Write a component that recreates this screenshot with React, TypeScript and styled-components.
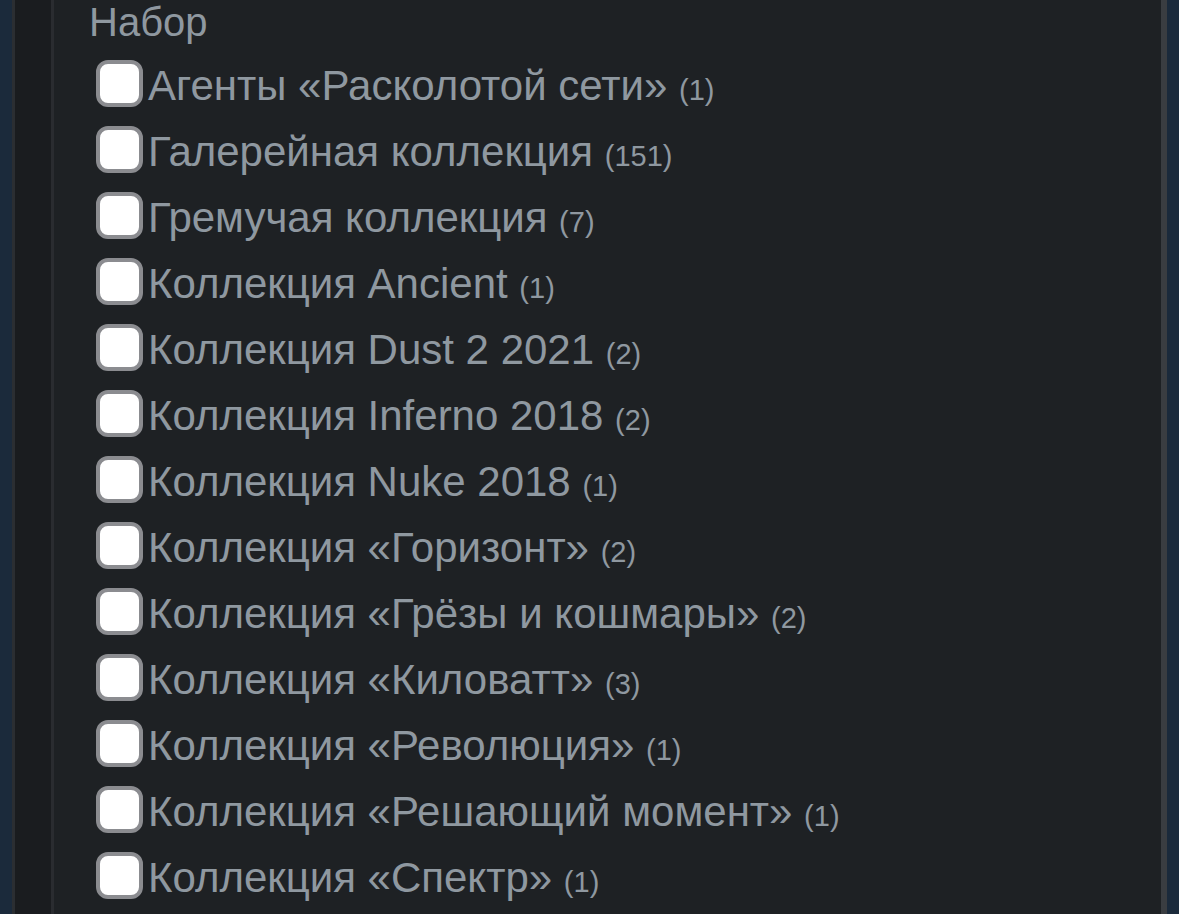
import styled, { createGlobalStyle } from "styled-components";

const GlobalStyle = createGlobalStyle`
  html, body {
    margin: 0;
    padding: 0;
    background: #1b2a3b;
    height: 100%;
    overflow: hidden;
  }
`;

const Page = styled.div`
  display: flex;
  height: 914px;
  padding: 0 12px;
  font-family: "Liberation Sans", Arial, sans-serif;
`;

const Frame = styled.div`
  flex: 1;
  display: flex;
  background: #1a1c1f;
  border-left: 3px solid #2b2e32;
  padding-left: 36px;
`;

const Panel = styled.section`
  flex: 1;
  background: #1e2124;
  border-left: 3px solid #2a2c30;
  border-right: 6px solid #3a3d41;
  padding-left: 35px;
`;

const Title = styled.div`
  font-size: 40px;
  line-height: 44px;
  color: #8f98a0;
  margin-bottom: 6px;
`;

const List = styled.ul`
  list-style: none;
  margin: 0;
  padding: 0;
`;

const Row = styled.li`
  display: flex;
  align-items: center;
  height: 66px;
  padding-left: 7px;
`;

const Box = styled.span`
  flex: none;
  box-sizing: border-box;
  width: 47px;
  height: 47px;
  border: 4px solid #8b8c90;
  border-radius: 12px;
  background: #ffffff;
  margin-right: 5px;
`;

const Label = styled.span`
  font-size: 42px;
  line-height: 46px;
  padding-top: 9px;
  color: #8f98a0;
  white-space: nowrap;
`;

const Count = styled.span`
  font-size: 29px;
  color: #8f98a0;
`;

const sets = [
  { name: "Агенты «Расколотой сети»", count: 1 },
  { name: "Галерейная коллекция", count: 151 },
  { name: "Гремучая коллекция", count: 7 },
  { name: "Коллекция Ancient", count: 1 },
  { name: "Коллекция Dust 2 2021", count: 2 },
  { name: "Коллекция Inferno 2018", count: 2 },
  { name: "Коллекция Nuke 2018", count: 1 },
  { name: "Коллекция «Горизонт»", count: 2 },
  { name: "Коллекция «Грёзы и кошмары»", count: 2 },
  { name: "Коллекция «Киловатт»", count: 3 },
  { name: "Коллекция «Революция»", count: 1 },
  { name: "Коллекция «Решающий момент»", count: 1 },
  { name: "Коллекция «Спектр»", count: 1 },
];

function App() {
  return (
    <Page>
      <GlobalStyle />
      <Frame>
        <Panel>
          <Title>Набор</Title>
          <List>
            {sets.map((s) => (
              <Row key={s.name}>
                <Box />
                <Label>
                  {s.name} <Count>({s.count})</Count>
                </Label>
              </Row>
            ))}
          </List>
        </Panel>
      </Frame>
    </Page>
  );
}

export default App;
